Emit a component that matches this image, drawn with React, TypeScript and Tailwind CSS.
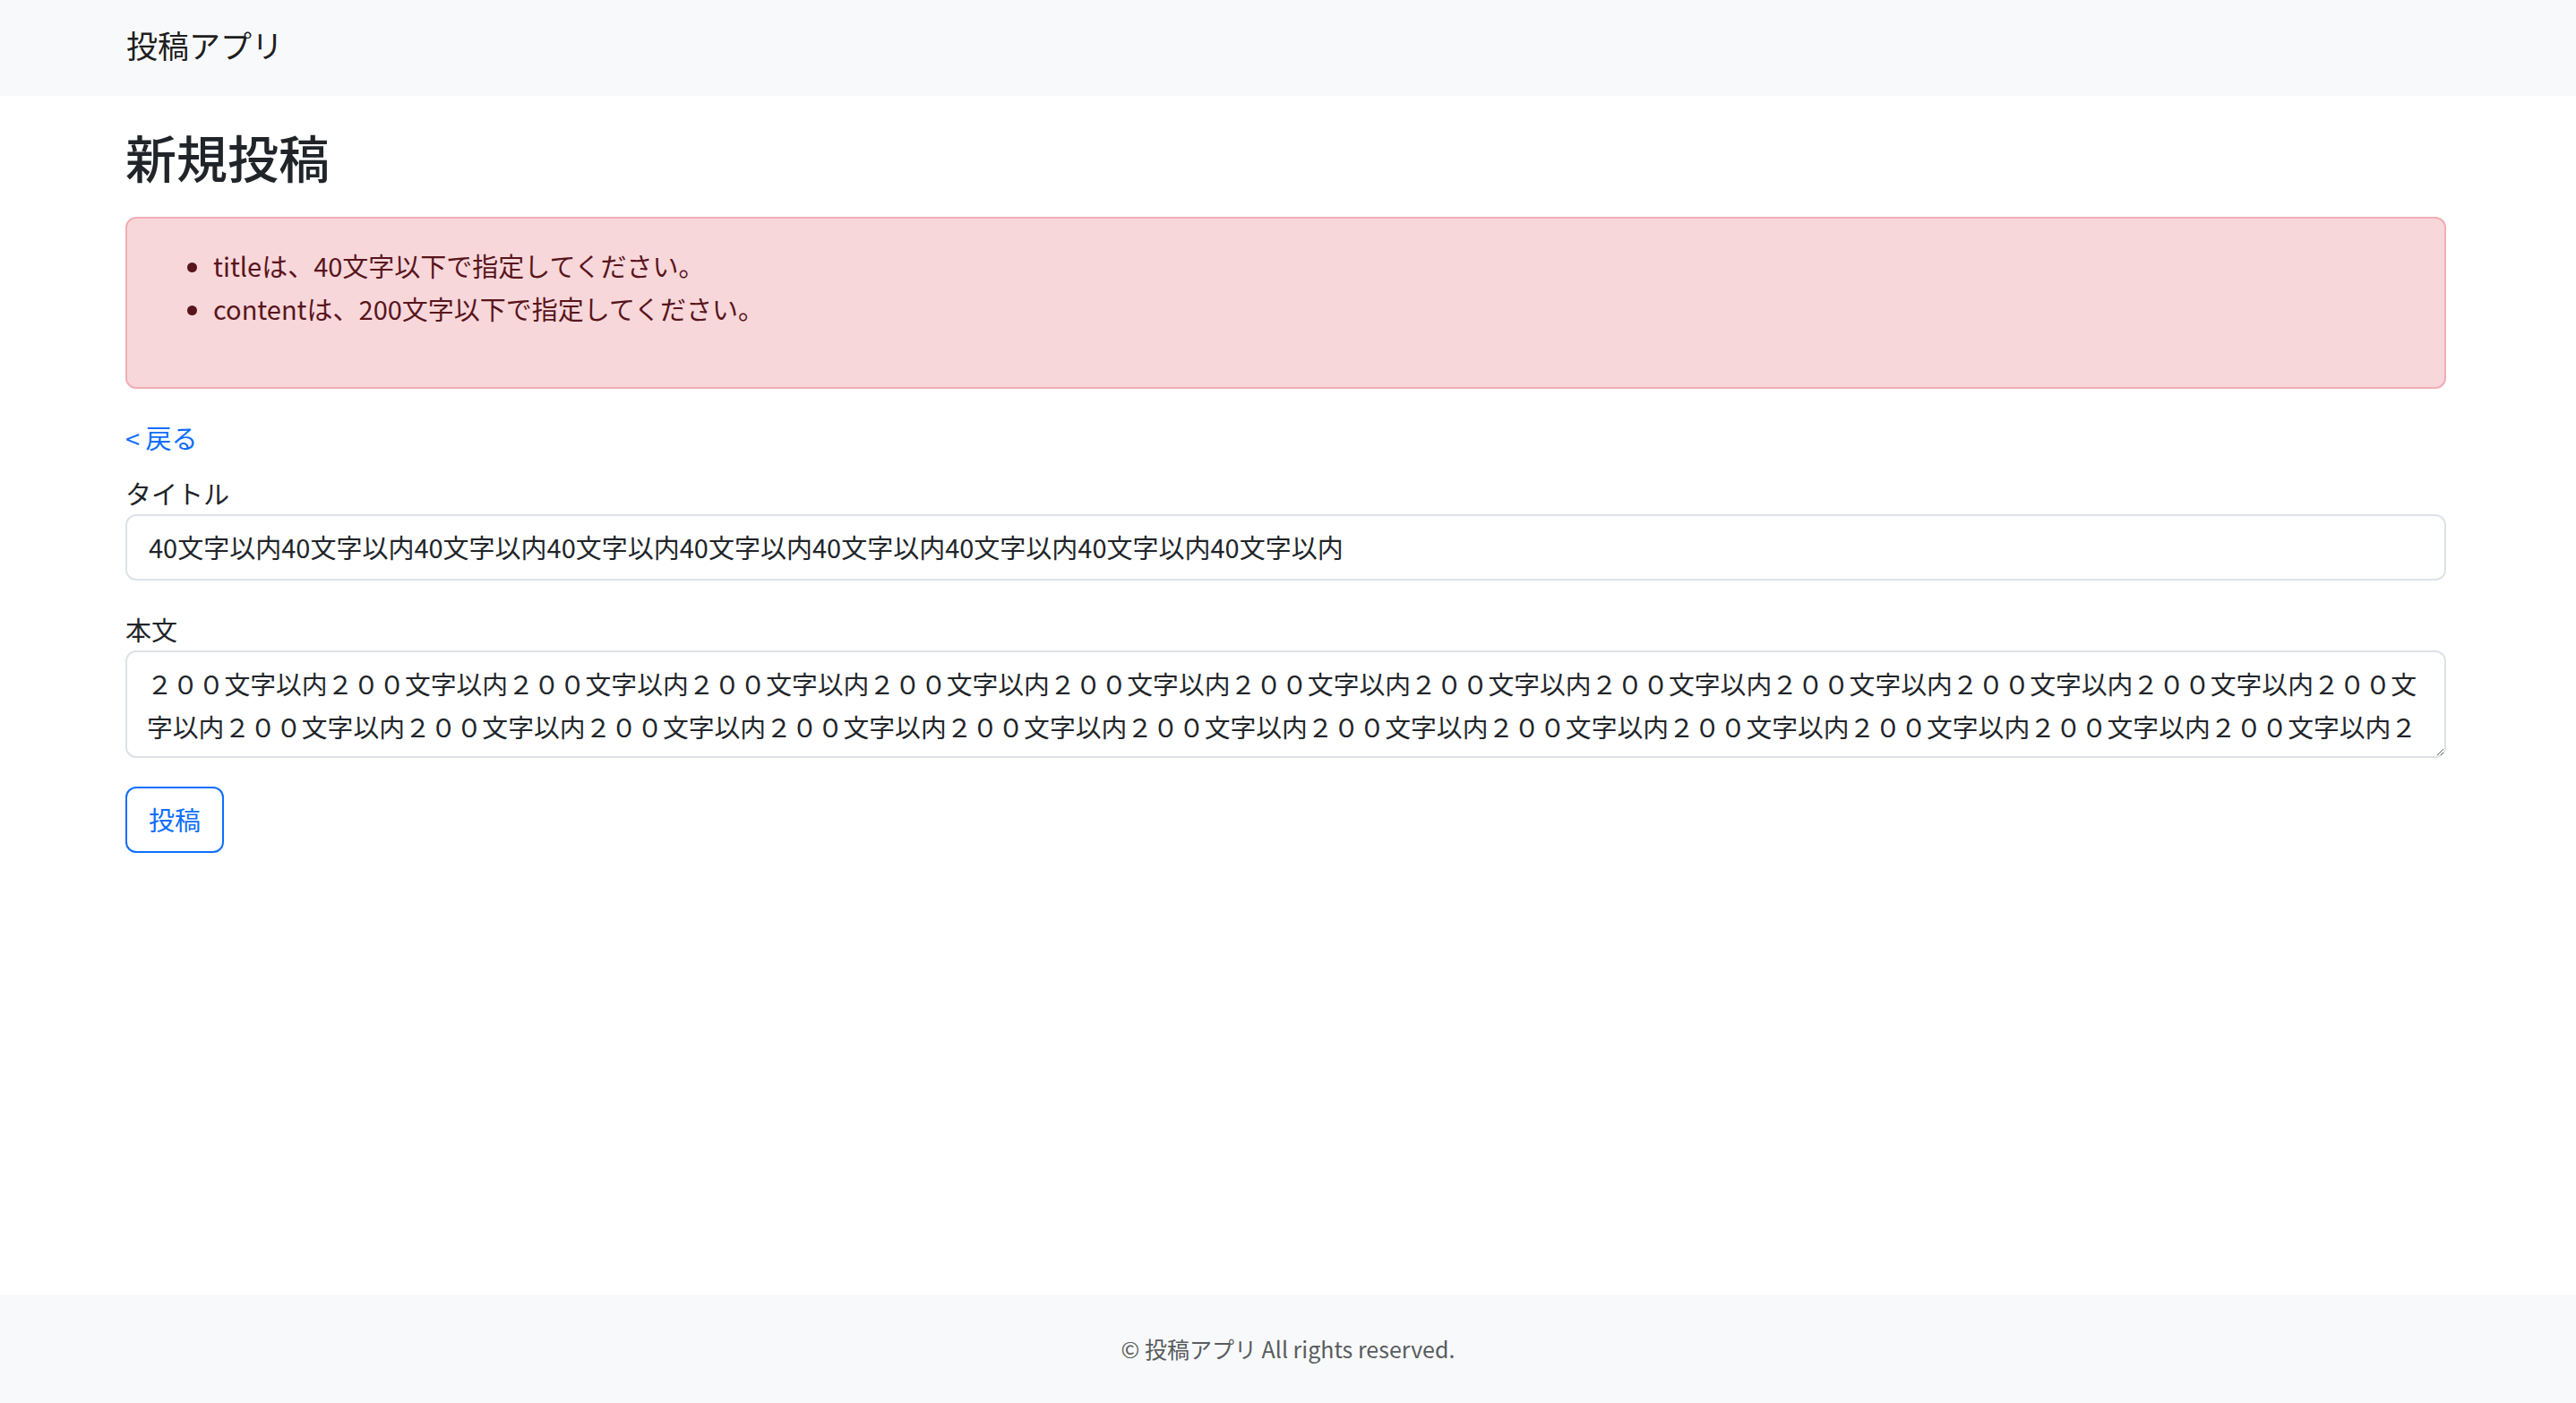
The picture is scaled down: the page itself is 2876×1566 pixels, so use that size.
import React from 'react';

const errors = [
  'titleは、40文字以下で指定してください。',
  'contentは、200文字以下で指定してください。',
];

const titleValue = '40文字以内'.repeat(9);
const contentValue = '２００文字以内'.repeat(30);

export default function App() {
  return (
    <div className="flex min-h-screen flex-col bg-white font-['Noto_Sans_CJK_JP','Noto_Sans',sans-serif] text-[#212529]">
      {/* navbar */}
      <header className="flex h-[107px] items-center bg-[#f8f9fa]">
        <div className="mb-[7px] ml-[141px] text-[35px] leading-[52px] text-black/90">投稿アプリ</div>
      </header>

      <main className="flex-1 pl-[140px] pr-[145px]">
        <h1 className="mt-[33px] mb-[34px] text-[57px] leading-[68px] font-medium">新規投稿</h1>

        <div className="rounded-[12px] border-2 border-[#f1aeb5] bg-[#f8d7da] px-[32px] pt-[28px] pb-[32px] text-[#58151c]">
          <ul className="mb-[32px] list-disc pl-[64px]">
            {errors.map((msg) => (
              <li key={msg} className="text-[29px] leading-[48px]">
                {msg}
              </li>
            ))}
          </ul>
        </div>

        <div className="mt-[30px] text-[29px] leading-[48px]">
          <a href="#" className="text-[#0d6efd] no-underline">
            &lt; 戻る
          </a>
        </div>

        <form onSubmit={(e) => e.preventDefault()}>
          <div className="mb-[30px]">
            <label htmlFor="title" className="mt-[14px] block text-[29px] leading-[48px]">
              タイトル
            </label>
            <input
              id="title"
              type="text"
              defaultValue={titleValue}
              className="block h-[74px] w-full rounded-[12px] border-2 border-[#dee2e6] bg-white px-[24px] pb-[2px] text-[29px] text-[#212529] outline-none"
            />
          </div>

          <div className="mb-[32px]">
            <label htmlFor="content" className="block text-[29px] leading-[48px]">
              本文
            </label>
            <textarea
              id="content"
              rows={2}
              defaultValue={contentValue}
              className="block h-[120px] w-full resize-y overflow-hidden rounded-[12px] border-2 border-[#dee2e6] bg-white px-[22px] pt-[11px] pb-[12px] text-[28.8px] leading-[48px] text-[#212529] outline-none"
            />
          </div>

          <button
            type="submit"
            className="flex h-[74px] items-center rounded-[12px] border-2 border-[#0d6efd] bg-white px-[24px] text-[29px] text-[#0d6efd]"
          >
            投稿
          </button>
        </form>
      </main>

      <footer className="flex h-[121px] items-center justify-center bg-[#f8f9fa] text-[25px] text-[#595c5f]">
        © 投稿アプリ All rights reserved.
      </footer>
    </div>
  );
}
